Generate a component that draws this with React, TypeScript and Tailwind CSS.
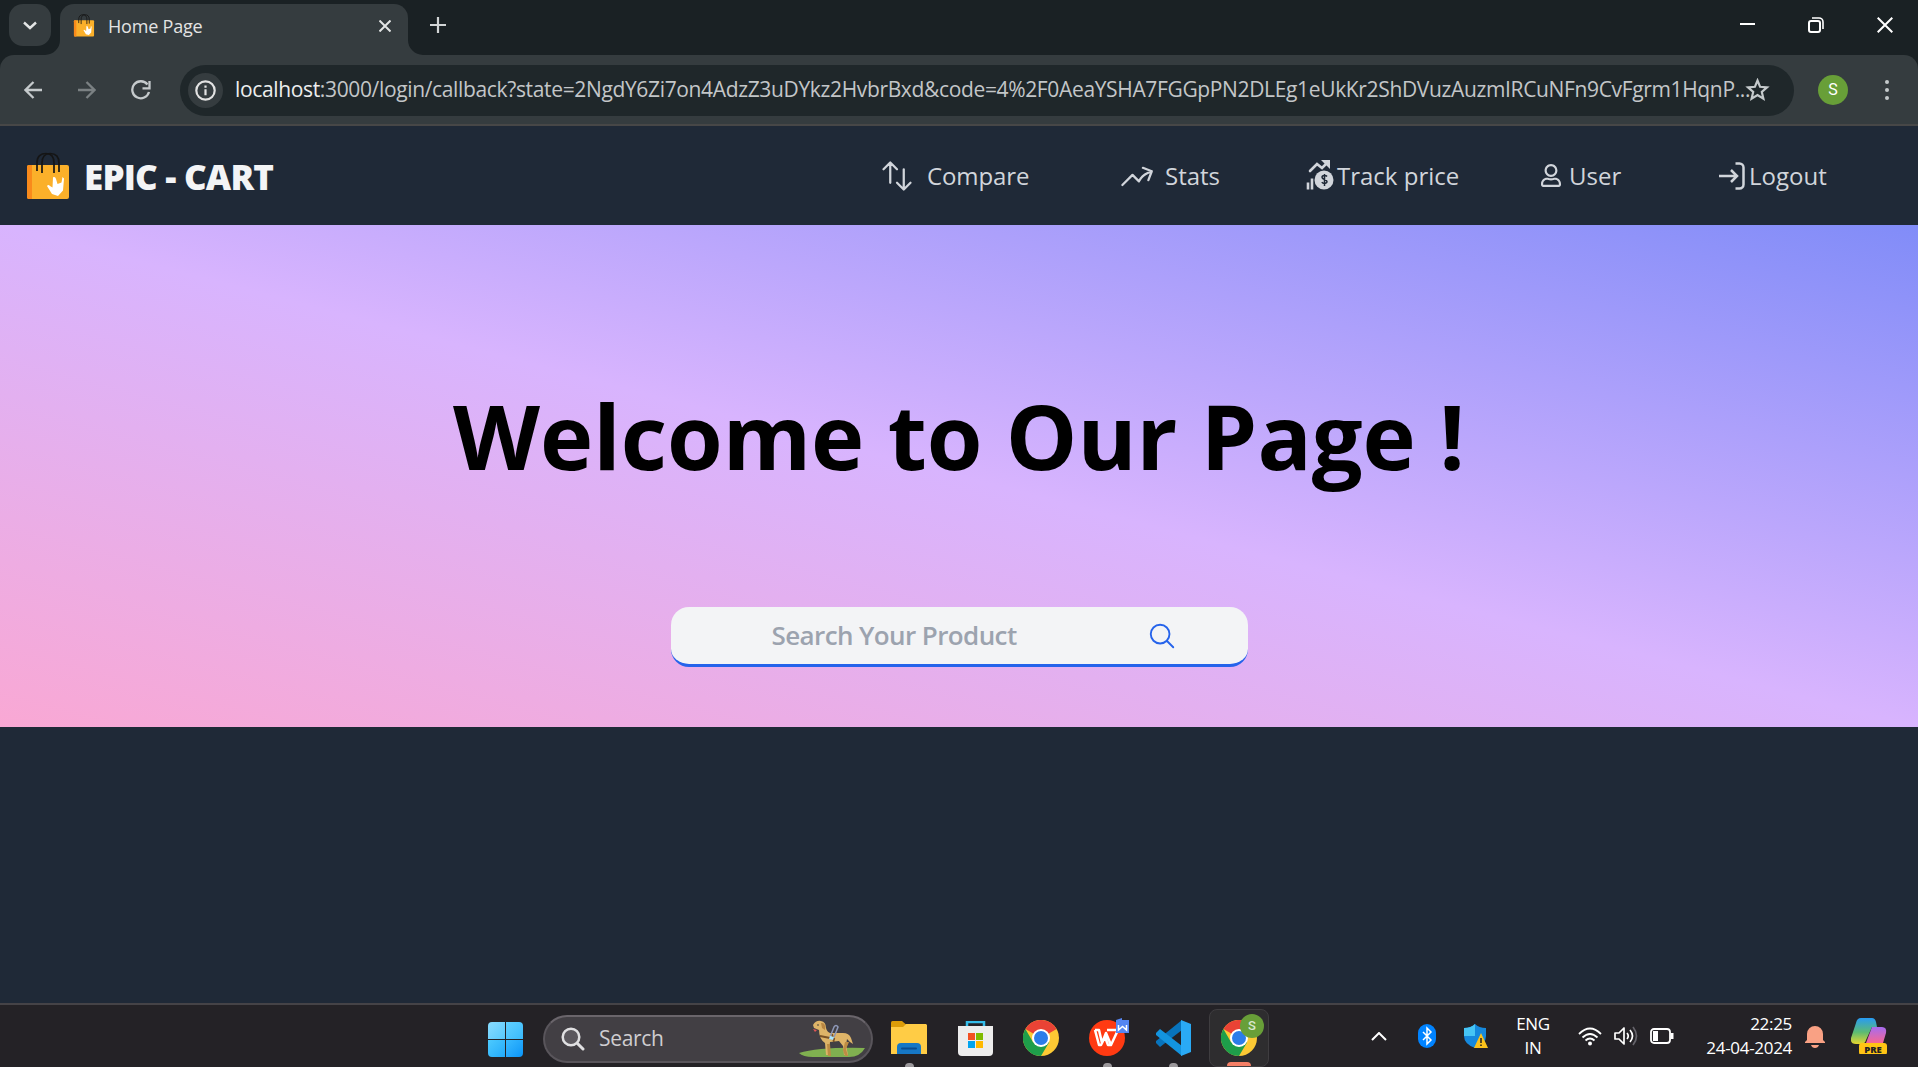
import React from "react";
import { HiOutlineArrowsUpDown, HiOutlineArrowTrendingUp, HiOutlineMagnifyingGlass } from "react-icons/hi2";
import { FaRegUser } from "react-icons/fa";

type NavEntry = { label: string; icon: React.ReactNode; box: string; text: string };

function Bag({ className }: { className: string }) {
  return (
    <svg viewBox="0 0 44 48" className={className}>
      <rect x="1" y="13" width="42" height="34" rx="2" fill="#fbb02a" />
      <path d="M3 13h3v34H3a2 2 0 0 1-2-2V15a2 2 0 0 1 2-2z" fill="#f98a1b" />
      <g fill="none" stroke="#151515" strokeWidth="1.7">
        <path d="M11 19V11C11 4 15 1.500 20 1.500S28 5 28 11v10" />
        <path d="M16 21V11C16 5 19 1.500 24 1.500S33 4 33 11v9" />
      </g>
      <path d="M27 25.500c1.500-1 2.500 0 3 1.500l1.500 5 4-1.500 1-5.500 1.500 1.500-1 12-5 5.500-6-2-5-8c1-1.500 2-1 3 0l2.500 1.500z" fill="#fff" />
    </svg>
  );
}

function TrackIcon() {
  return (
    <svg viewBox="0 0 28 33" className="h-[33px] w-[28px]" fill="none" stroke="currentColor">
      <path d="M2 23.500v7M6 19.500v11" strokeWidth="2.600" />
      <path d="M4 12l7-7 5 4 6-6" strokeWidth="2.600" strokeLinecap="round" />
      <path d="M15 1h9v9z" fill="currentColor" stroke="none" />
      <circle cx="18" cy="21" r="9.500" fill="currentColor" stroke="none" />
      <path d="M21 17.500c-1-1.500-5-1.500-5 .8 0 2.800 5 1.600 5 4.300 0 2.300-4 2.300-5.200.5M18.500 15v12" stroke="#1f2937" strokeWidth="1.500" />
    </svg>
  );
}

function LogoutIcon() {
  return (
    <svg viewBox="0 0 28 28" className="h-[28px] w-[28px]" fill="none" stroke="currentColor" strokeWidth="2.500">
      <path d="M1 14h18M13 8l6 6-6 6" />
      <path d="M17.500 1.500h4a4 4 0 0 1 4 4v17a4 4 0 0 1-4 4h-4" />
    </svg>
  );
}

const NAV: NavEntry[] = [
  { label: "Compare", icon: <HiOutlineArrowsUpDown className="size-9" />, box: "w-[240px]", text: "ml-3 tracking-[-0.1px]" },
  { label: "Stats", icon: <HiOutlineArrowTrendingUp className="size-9" />, box: "w-[187px]", text: "ml-2.5" },
  { label: "Track price", icon: <TrackIcon />, box: "w-[235px]", text: "ml-[3px]" },
  { label: "User", icon: <FaRegUser className="h-[25px] w-[20px]" />, box: "w-[177px]", text: "ml-2" },
  { label: "Logout", icon: <LogoutIcon />, box: "w-[200px]", text: "ml-[3px]" },
];

function Chrome({ className }: { className: string }) {
  return (
    <svg viewBox="0 0 36 36" className={className}>
      <circle cx="18" cy="18" r="18" fill="#fcc934" />
      <path d="M18 18 2.400 9A18 18 0 0 1 33.600 9z" fill="#ea4335" />
      <path d="M2.400 9A18 18 0 0 0 18 36l8-13.500L18 18 10.200 22.500z" fill="#1e9e4a" />
      <circle cx="18" cy="18" r="9" fill="#fff" />
      <circle cx="18" cy="18" r="7" fill="#2b7de9" />
    </svg>
  );
}

function BrowserChrome() {
  return (
    <header className="bg-[#1a2124]">
      <div className="flex h-[55px] items-start">
        <button className="ml-[9px] mt-1 flex size-[42px] items-center justify-center rounded-[14px] bg-[#353c3f]">
          <svg viewBox="0 0 14 9" className="h-[9px] w-[14px]" fill="none" stroke="#e3e5e5" strokeWidth="2.400"><path d="M1 1.500l6 5.500 6-5.500" /></svg>
        </button>
        <div className="flex h-[51px] w-[9px] items-end self-end" />
        <div className="relative mt-1 flex h-[51px] w-[348px] items-center rounded-t-[14px] bg-[#353c3f] pb-2 pl-[13px] pr-[17px]">
          <svg viewBox="0 0 15 15" className="absolute -left-[15px] bottom-0 size-[15px]"><path d="M15 0v15H0A15 15 0 0 0 15 0z" fill="#353c3f" /></svg>
          <svg viewBox="0 0 15 15" className="absolute -right-[15px] bottom-0 size-[15px]"><path d="M0 0v15h15A15 15 0 0 1 0 0z" fill="#353c3f" /></svg>
          <Bag className="h-[23px] w-[22px]" />
          <span className="ml-[13px] mt-px text-[18px] font-medium tracking-[-0.2px] text-[#e3e3e3]">Home Page</span>
          <svg viewBox="0 0 12 12" className="ml-auto size-[12px]" stroke="#e3e5e5" strokeWidth="2"><path d="M.5.500l11 11M11.500.500l-11 11" /></svg>
        </div>
        <svg viewBox="0 0 16 16" className="ml-[22px] mt-[17px] size-[16px]" stroke="#d2d5d6" strokeWidth="2.200"><path d="M8 0v16M0 8h16" /></svg>
        <div className="ml-auto mr-[25px] mt-[17px] flex items-center text-white">
          <svg viewBox="0 0 15 16" className="h-4 w-[15px]" stroke="currentColor" strokeWidth="2"><path d="M0 7h15" /></svg>
          <svg viewBox="0 0 16 16" className="ml-[53px] size-4" fill="none" stroke="currentColor" strokeWidth="2"><rect x="1" y="4" width="11" height="11" rx="2" /><path d="M4 1h7a4 4 0 0 1 4 4v7" strokeWidth="1.600" /></svg>
          <svg viewBox="0 0 16 16" className="ml-[53px] size-4" stroke="currentColor" strokeWidth="2"><path d="M.7.700l14.600 14.600M15.300.700L.7 15.300" /></svg>
        </div>
      </div>
      <div className="flex h-[71px] items-center rounded-t-[14px] border-b-2 border-[#474747] bg-[#353c3f] pt-px">
        <div className="ml-6 flex w-[156px] items-center text-[#c5cacc]">
          <svg viewBox="0 0 18 18" className="size-[18px]" fill="none" stroke="currentColor" strokeWidth="2.300"><path d="M18 9H2M9.500 1L1.500 9l8 8" /></svg>
          <svg viewBox="0 0 18 18" className="ml-9 size-[18px] text-[#7b8183]" fill="none" stroke="currentColor" strokeWidth="2.300"><path d="M0 9h16M8.500 1l8 8-8 8" /></svg>
          <svg viewBox="0 0 20 20" className="ml-[35px] size-[20px]" fill="none" stroke="currentColor" strokeWidth="2.300"><path d="M16.500 4.500A8.500 8.500 0 1 0 18 12" /><path d="M11.500 8.300h7V1" /></svg>
        </div>
        <div className="flex h-[51px] w-[1614px] items-center rounded-full bg-[#1f272a] pl-2">
          <div className="flex size-[35px] shrink-0 items-center justify-center rounded-full bg-[#353c3f]">
            <svg viewBox="0 0 21 21" className="size-[21px]" fill="none" stroke="#e3e3e3" strokeWidth="2.200"><circle cx="10.500" cy="10.500" r="9.200" /><path d="M10.500 9.300v6M10.500 5.500v2.300" /></svg>
          </div>
          <span className="ml-3 w-[1502px] shrink-0 whitespace-nowrap text-[21px] tracking-[-0.35px] text-[#c3c6c8]">
            <span className="text-[#eceeee]">localhost</span>:3000/login/callback?state=2NgdY6Zi7on4AdzZ3uDYkz2HvbrBxd&amp;code=4%2F0AeaYSHA7FGGpPN2DLEg1eUkKr2ShDVuzAuzmIRCuNFn9CvFgrm1HqnP...
          </span>
          <svg viewBox="0 0 24 24" className="ml-2 h-[24px] w-[25px] shrink-0" fill="none" stroke="#c5cacc" strokeWidth="2.200"><path d="M12 2.500l2.600 6.300 6.900.6-5.200 4.500 1.600 6.700-5.900-3.600-5.900 3.600 1.600-6.700L2.500 9.400l6.900-.6z" /></svg>
        </div>
        <div className="ml-6 flex size-[30px] items-center justify-center rounded-full bg-[#689f38] font-[Roboto] text-[16px] text-white">S</div>
        <div className="ml-[37px] flex flex-col gap-1">
          <i className="size-1 rounded-full bg-[#c5cacc]" /><i className="size-1 rounded-full bg-[#c5cacc]" /><i className="size-1 rounded-full bg-[#c5cacc]" />
        </div>
      </div>
    </header>
  );
}

function Dog() {
  return (
    <svg viewBox="0 0 66 38" className="h-[38px] w-[66px]">
      <path d="M0 33q20-6 66-5q-5 9-16 9H14Q4 37 0 33z" fill="#80b050" />
      <path d="M14 5q3-5 8-4 5 1 5 7 1 4 4 5h13q6 0 8 5l2 6-3-2-3-3-1 6 2 10h-4l-1-9-4-5-9 1-1 13h-3l-1-12q-6-4-6-13l-5-2z" fill="#deb468" />
      <path d="M28 24l1 12h3l-1-12zM46 22l-2 8 2 6h3l-2-7 3-7z" fill="#bd8c44" />
      <path d="M14 9l4 1-2 2z" fill="#e25555" /><circle cx="19" cy="5" r=".8" fill="#333" />
      <path d="M22 3q5-1 4 7l-3-2z" fill="#b98642" />
      <path d="M21 16l15 3M33 14l2 8" stroke="#7a5226" strokeWidth="1.800" />
      <path d="M31 17l4-10q2-3 4 0l-4 10" fill="none" stroke="#8e98b8" strokeWidth="1.500" /><path d="M31 16l4 1-1 3-4-1z" fill="#a8e4ff" />
    </svg>
  );
}

function Slot({ children, mark, active }: { children: React.ReactNode; mark?: string; active?: boolean }) {
  return (
    <div className={active ? "relative flex h-[58px] w-[60px] items-center justify-center rounded-lg border border-[#3f3d40] bg-[#2e2d2f]" : "relative flex h-[58px] w-[60px] items-center justify-center"}>
      {children}
      {mark && <i className={mark} />}
    </div>
  );
}

function Taskbar() {
  const dot = "absolute bottom-0 left-[26px] h-1 w-[9px] rounded-t-sm bg-[#9b989b]";
  return (
    <footer className="flex h-16 items-start border-t-2 border-[#454347] bg-[#242226]">
      <div className="ml-[488px] mt-[17px] grid size-[35px] grid-cols-2 gap-px overflow-hidden rounded-sm">
        <i className="bg-linear-to-br from-[#88dcff] to-[#56c9fd]" /><i className="bg-linear-to-br from-[#60d0ff] to-[#38bafc]" />
        <i className="bg-linear-to-br from-[#4ccafe] to-[#20aafa]" /><i className="bg-linear-to-br from-[#38bbff] to-[#0795f7]" />
      </div>
      <div className="ml-5 mt-2.5 flex h-12 w-[330px] items-center rounded-full border-2 border-[#59555b] border-t-[#6a656b] bg-[#423f44] pl-4 pr-[6px]">
        <svg viewBox="0 0 24 24" className="size-6" fill="none" stroke="#e0e0e2"><circle cx="10" cy="10" r="8.300" fill="#5b585e" strokeWidth="2.500" /><path d="M16.500 16.500l5.500 5.500" strokeWidth="3" strokeLinecap="round" /></svg>
        <span className="ml-[14px] text-[21px] tracking-[-0.3px] text-[#cfcdd0]">Search</span>
        <span className="ml-auto"><Dog /></span>
      </div>
      <div className="ml-1.5 mt-1 flex gap-[6px]">
        <Slot mark={dot}>
          <svg viewBox="0 0 36 34" className="h-[34px] w-9"><path d="M0 1.500Q0 0 1.500 0H11l4 3.500V8H0z" fill="#dc9c08" /><path d="M0 6h12l3-3h20l1 1v29H0z" fill="#ffcc45" /><path d="M6 33v-7q0-4 4-4h16q4 0 4 4v7z" fill="#1677c5" /><path d="M11 27.500h14" stroke="#0a4d91" strokeWidth="2" strokeLinecap="round" /></svg>
        </Slot>
        <Slot>
          <svg viewBox="0 0 35 35" className="size-[35px]"><path d="M9 6V1h17v5" fill="none" stroke="#35bdea" strokeWidth="2.500" /><path d="M0 5h35v26q0 4-4 4H4q-4 0-4-4z" fill="#ededed" /><path d="M10 12h7v7h-7z" fill="#f25022" /><path d="M18 12h7v7h-7z" fill="#7fba00" /><path d="M10 20h7v7h-7z" fill="#00a4ef" /><path d="M18 20h7v7h-7z" fill="#ffb900" /></svg>
        </Slot>
        <Slot><Chrome className="size-9" /></Slot>
        <Slot mark={dot}>
          <svg viewBox="0 0 40 38" className="h-[38px] w-10 -translate-y-px translate-x-0.5"><circle cx="18" cy="20" r="18" fill="#ff3a12" /><path d="M6 12h4l3 13 4-10 5 12 7-15M18 12h11l-7 15h-3l-3-8-4 8h-2L6 12" fill="none" stroke="#fff" strokeWidth="2.500" strokeLinejoin="round" /><path d="M27 2l6-2v2h7v13H27z" fill="#5586f2" /><path d="M29.500 7v5l4-3.500 4 3.500V7" fill="none" stroke="#fff" strokeWidth="1.500" /></svg>
        </Slot>
        <Slot mark={dot}>
          <svg viewBox="0 0 36 36" className="size-9"><path d="M27 0v10L5 27l-4-4v-2z" fill="#0874bd" /><path d="M27 36V26L5 9l-4 4v2z" fill="#1394df" /><path d="M26 0l10 4v28l-10 4z" fill="#2aaaf5" /></svg>
        </Slot>
        <Slot active mark="absolute bottom-0 left-[17px] h-1 w-6 rounded-t-sm bg-[#f57f66]">
          <Chrome className="size-9" />
          <b className="absolute right-1 top-1 flex size-6 items-center justify-center rounded-full bg-[#689f38] font-[Roboto] text-[13px] font-medium text-[#dbe8cf]">S</b>
        </Slot>
      </div>
      <div className="ml-auto flex h-full items-center text-white">
        <svg viewBox="0 0 16 9" className="h-[9px] w-4" fill="none" stroke="currentColor" strokeWidth="2"><path d="M1 8l7-7 7 7" /></svg>
        <svg viewBox="0 0 18 24" className="ml-[31px] h-6 w-[18px]"><rect width="18" height="24" rx="9" fill="#0083ff" /><path d="M5 8l8 8-4 4V4l4 4-8 8" fill="none" stroke="#fff" strokeWidth="1.500" /></svg>
        <svg viewBox="0 0 24 25" className="ml-7 h-[25px] w-6"><path d="M0 4q7 0 11-4 4 4 11 4v8q0 8-11 12Q0 20 0 12z" fill="#1689dd" /><path d="M0 4q7 0 11-4v12H0z" fill="#46c5f5" /><path d="M17 9l7 15H10z" fill="#fcc21b" /><path d="M17 14v5M17 20.500V22" stroke="#222" strokeWidth="1.500" /></svg>
        <div className="ml-[27px] w-9 text-center text-[17px] leading-6 tracking-[-0.3px]">ENG<br />IN</div>
        <svg viewBox="0 0 24 19" className="ml-[27px] h-[19px] w-6" fill="none" stroke="currentColor" strokeWidth="1.800"><path d="M1 7Q12-4 23 7M4.500 10.500q7.500-7 15 0M7.500 13.500q4.500-4 9 0" /><circle cx="12" cy="16.500" r="2" fill="currentColor" stroke="none" /></svg>
        <svg viewBox="0 0 24 20" className="ml-3 h-5 w-6" fill="none" stroke="currentColor" strokeWidth="1.700"><path d="M1 7h4l5-5v16l-5-5H1z" strokeLinejoin="round" /><path d="M13 7q2.500 3 0 6M16 4q5 6 0 12" /><path d="M19 1q7 9 0 18" stroke="#65636a" /></svg>
        <svg viewBox="0 0 24 16" className="ml-3 h-4 w-6" fill="none" stroke="currentColor" strokeWidth="1.800"><rect x="1" y="1" width="19" height="14" rx="3" /><path d="M3 3h5v10H3z" fill="currentColor" stroke="none" /><path d="M22 5v6" strokeWidth="3" /></svg>
        <div className="ml-6 w-[94px] whitespace-nowrap text-right text-[17px] leading-6 tracking-[-0.3px]">22:25<br />24-04-2024</div>
        <svg viewBox="0 0 20 23" className="ml-[13px] h-[23px] w-5" fill="#f9a184"><path d="M2 9a8 8 0 0 1 16 0v6l2 2v1H0v-1l2-2zM6 20h8q-1 3-4 3t-4-3z" /></svg>
        <svg viewBox="0 0 36 36" className="ml-[26px] mr-[31px] h-9 w-9">
          <defs><linearGradient id="cpA" x2="0" y2="1"><stop stopColor="#289bf3" /><stop offset=".55" stopColor="#5dbb72" /><stop offset="1" stopColor="#e5d52e" /></linearGradient><linearGradient id="cpB" x2="0" y2="1"><stop stopColor="#a66cf0" /><stop offset="1" stopColor="#f76692" /></linearGradient></defs>
          <path d="M10 0h11q3 0 4 4l1 5h-5L15 22q-1 4-5 4H5q-6 0-5-6L5 5q1-5 5-5z" fill="url(#cpA)" /><path d="M21 9h10q5 0 4 6l-3 10H15z" fill="url(#cpB)" />
          <rect x="8" y="25" width="28" height="12" rx="3" fill="#ffc414" /><text x="22" y="34.500" textAnchor="middle" fontFamily="Open Sans" fontSize="9.500" fontWeight="800" fill="#222">PRE</text>
        </svg>
      </div>
    </footer>
  );
}

export default function App() {
  return (
    <div className="flex h-[1067px] w-[1918px] flex-col overflow-hidden bg-gray-800 font-['Open_Sans','Noto_Sans',sans-serif]">
      <BrowserChrome />
      <nav className="flex h-[99px] shrink-0 items-center bg-[#1f2937]">
        <Bag className="ml-[26px] h-[48px] w-[44px]" />
        <h1 className="ml-[14px] mt-1 text-[35px] font-extrabold tracking-[-0.8px] text-gray-100">EPIC - CART</h1>
        <ul className="ml-auto flex text-[#d1d5db]">
          {NAV.map((n) => (
            <li key={n.label} className={"flex h-10 items-center whitespace-nowrap text-[24px] " + n.box}>
              {n.icon}
              <span className={n.text}>{n.label}</span>
            </li>
          ))}
        </ul>
      </nav>
      <main className="flex h-[502px] shrink-0 flex-col items-center bg-[linear-gradient(to_top_right,#f9a8d4,#d8b4fe,#818cf8)]">
        <h2 className="mt-[150px] whitespace-nowrap text-[90px] font-bold leading-[120px] tracking-[0px] text-black">Welcome to Our Page !</h2>
        <div className="mt-[112px] flex h-[60px] w-[577px] items-center rounded-[18px] border-b-[3px] border-[#2563eb] bg-[#f3f4f6] pl-[101px] text-[#9ca3af]">
          <span className="whitespace-nowrap text-[26px] font-semibold tracking-[-0.6px]">Search Your Product</span>
          <HiOutlineMagnifyingGlass className="ml-auto mr-[71px] size-[30px] text-[#2563eb]" />
        </div>
      </main>
      <div className="flex-1 bg-[#1f2937]" />
      <Taskbar />
    </div>
  );
}
